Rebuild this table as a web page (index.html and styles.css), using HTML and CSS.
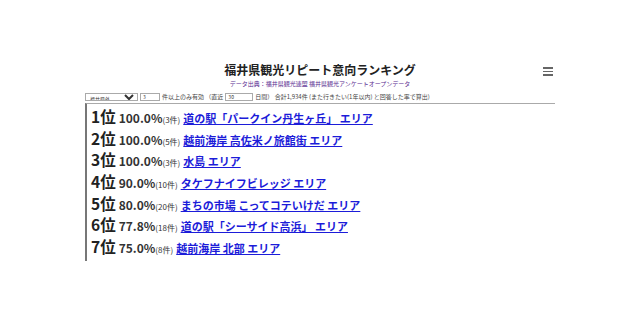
FILE: index.html
```html
<!DOCTYPE html>
<html lang="ja">
<head>
<meta charset="utf-8">
<link rel="stylesheet" href="styles.css">
</head>
<body>
<div class="page">
  <header class="header">
    <h1 class="title">福井県観光リピート意向ランキング</h1>
    <p class="source">データ出典：福井県観光連盟 福井県観光アンケートオープンデータ</p>
    <div class="menu"><span></span><span></span><span></span></div>
  </header>
  <div class="controls">
    <select class="sel"><option>福井県外</option></select>
    <input class="num" value="3">
    <span class="lbl">件以上のみ有効 （直近</span>
    <input class="days" value="30">
    <span class="lbl">日間） 合計1,934件 (また行きたい(1年以内) と回答した率で算出)</span>
  </div>
  <div class="box">
    <div class="row"><span class="rank">1位</span><span class="pct">100.0%</span><span class="cnt">(3件)</span><a class="link" href="#">道の駅「パークイン丹生ヶ丘」 エリア</a></div>
    <div class="row"><span class="rank">2位</span><span class="pct">100.0%</span><span class="cnt">(5件)</span><a class="link" href="#">越前海岸 高佐米ノ旅館街 エリア</a></div>
    <div class="row"><span class="rank">3位</span><span class="pct">100.0%</span><span class="cnt">(3件)</span><a class="link" href="#">水島 エリア</a></div>
    <div class="row"><span class="rank">4位</span><span class="pct">90.0%</span><span class="cnt">(10件)</span><a class="link" href="#">タケフナイフビレッジ エリア</a></div>
    <div class="row"><span class="rank">5位</span><span class="pct">80.0%</span><span class="cnt">(20件)</span><a class="link" href="#">まちの市場 こってコテいけだ エリア</a></div>
    <div class="row"><span class="rank">6位</span><span class="pct">77.8%</span><span class="cnt">(18件)</span><a class="link" href="#">道の駅「シーサイド高浜」 エリア</a></div>
    <div class="row"><span class="rank">7位</span><span class="pct">75.0%</span><span class="cnt">(8件)</span><a class="link" href="#">越前海岸 北部 エリア</a></div>
  </div>
</div>
</body>
</html>
```

FILE: styles.css
```css
html, body {
  margin: 0;
  padding: 0;
  background: #fff;
}
body {
  font-family: "Noto Sans CJK JP", "Noto Sans", sans-serif;
  color: #222;
}
.page {
  width: 470px;
  margin: 0 auto;
  padding-top: 62px;
}
.header {
  position: relative;
  text-align: center;
}
.title {
  margin: 0;
  font-size: 12px;
  line-height: 15px;
  font-weight: bold;
  color: #222;
}
.source {
  margin: 3px 0 0;
  font-size: 6px;
  line-height: 8px;
  color: #5a2d91;
}
.menu {
  position: absolute;
  right: 2px;
  top: 5px;
  width: 10px;
  display: flex;
  flex-direction: column;
  gap: 2px;
}
.menu span {
  display: block;
  height: 1.5px;
  background: #666;
}
.controls {
  display: flex;
  align-items: center;
  gap: 2px;
  margin-top: 4px;
  height: 9px;
  font-size: 6px;
  color: #444;
}
.sel {
  width: 53px;
  height: 8px;
  font-size: 5px;
  padding: 0;
  border: 1px solid #aaa;
  border-radius: 0;
  background: #fff;
  color: #333;
  font-family: inherit;
}
.num, .days {
  height: 8px;
  box-sizing: border-box;
  font-size: 5px;
  padding: 0 2px;
  border: 1px solid #aaa;
  font-family: inherit;
  color: #333;
}
.num { width: 20px; }
.days { width: 28px; }
.lbl { white-space: nowrap; }
.box {
  margin-top: 2px;
  border-top: 1px solid #aaa;
  border-left: 2px solid #777;
  padding: 5px 0 0 4px;
  display: flex;
  flex-direction: column;
}
.row {
  display: flex;
  align-items: baseline;
  height: 21.7px;
  line-height: 1;
  white-space: nowrap;
}
.rank {
  font-size: 15.5px;
  font-weight: bold;
  color: #222;
  margin-right: 3px;
}
.pct {
  font-size: 12px;
  font-weight: bold;
  color: #333;
}
.cnt {
  font-size: 8px;
  color: #333;
  margin-right: 3px;
}
.link {
  font-size: 11px;
  font-weight: bold;
  color: #1c1cd9;
  text-decoration: underline;
}
```
